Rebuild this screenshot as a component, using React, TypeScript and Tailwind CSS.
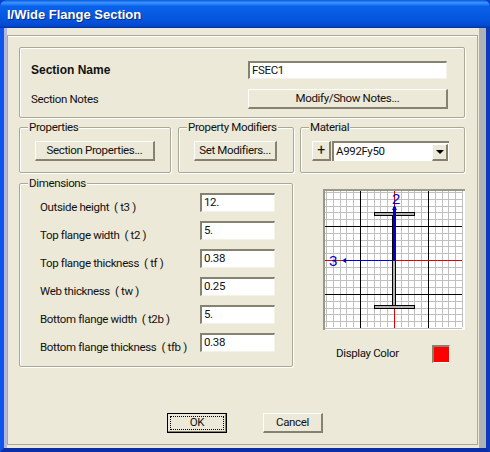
const font = "font-['Roboto','Liberation_Sans',Arial,sans-serif]";
const titleFont = "font-['Liberation_Sans',Arial,sans-serif]";

function Group({ title, className, children }: { title: string; className: string; children: React.ReactNode }) {
  return (
    <div className={`relative border border-[#aca899] shadow-[inset_1px_1px_0_#fff,1px_1px_0_#fff] rounded-[2px] ${className}`}>
      <span className="absolute left-[8px] top-[-8px] bg-[#ece9d8] px-[1px] leading-[14px]">{title}</span>
      {children}
    </div>
  );
}

function Btn({ children, className = '' }: { children: React.ReactNode; className?: string }) {
  return (
    <div className={`flex items-center justify-center bg-[#ece9d8] border-t border-l border-t-white border-l-white border-r-2 border-b-2 border-r-[#85836f] border-b-[#85836f] ${className}`}>
      {children}
    </div>
  );
}

function Field({ value, className = '' }: { value: string; className?: string }) {
  return (
    <div className={`bg-white pl-[2px] leading-[14px] border-t-2 border-l-2 border-t-[#85836f] border-l-[#85836f] border-r border-b border-r-[#f4f2e8] border-b-[#f4f2e8] ${className}`}>
      {value}
    </div>
  );
}

const DIMS = [
  ['Outside height  ( t3 )', '12.'],
  ['Top flange width  ( t2 )', '5.'],
  ['Top flange thickness  ( tf )', '0.38'],
  ['Web thickness  ( tw )', '0.25'],
  ['Bottom flange width  ( t2b )', '5.'],
  ['Bottom flange thickness  ( tfb )', '0.38'],
];

function Preview() {
  const minor = [];
  for (let i = 0; i < 21; i++) {
    minor.push(<line key={'v' + i} x1={1.5 + Math.round(i * 6.8)} y1="0" x2={1.5 + Math.round(i * 6.8)} y2="136" stroke="#c0c0c0" />);
    minor.push(<line key={'h' + i} x1="0" y1={1.5 + Math.round(i * 6.8)} x2="137" y2={1.5 + Math.round(i * 6.8)} stroke="#c0c0c0" />);
  }
  return (
    <div className="w-[142px] h-[141px] bg-white border-t-2 border-l-2 border-t-[#9a9888] border-l-[#9a9888]">
      <svg width="140" height="139" viewBox="0 0 140 139" className="block">
        {minor}
        <g stroke="#000">
          <line x1="35.5" y1="0" x2="35.5" y2="137" />
          <line x1="103.5" y1="0" x2="103.5" y2="137" />
          <line x1="0" y1="35.5" x2="137" y2="35.5" />
          <line x1="0" y1="103.5" x2="137" y2="103.5" />
        </g>
        <line x1="69.5" y1="0" x2="69.5" y2="137" stroke="#e00000" />
        <line x1="0" y1="69.5" x2="137" y2="69.5" stroke="#e00000" />
        <rect x="49.5" y="21.5" width="40" height="3" fill="#b4b4b4" stroke="#000" />
        <rect x="49.5" y="114.5" width="40" height="3" fill="#b4b4b4" stroke="#000" />
        <rect x="67.5" y="24.5" width="3" height="90" fill="#b4b4b4" stroke="#000" />
        <rect x="68" y="16" width="3" height="54" fill="#0000d0" />
        <line x1="20" y1="69.5" x2="69" y2="69.5" stroke="#0000d0" />
        <path d="M69.5 14l-2.5 5h5zM17 69.5l4-2.5v5z" fill="#0000d0" />
        <text x="71" y="13" fontSize="15" fill="#0000d0" textAnchor="middle" className={titleFont}>2</text>
        <text x="8" y="75" fontSize="15" fill="#0000d0" textAnchor="middle" className={titleFont}>3</text>
      </svg>
    </div>
  );
}

export default function App() {
  return (
    <div className={`w-[490px] h-[452px] overflow-hidden flex flex-col bg-[#0a3fd0] text-[11.5px] tracking-[-0.35px] text-[#111] ${font}`}>
      <div className="h-[28px] shrink-0 rounded-t-[7px] bg-[linear-gradient(180deg,#0a5ae0_0%,#3d95ff_10%,#0a62ea_22%,#0555dd_70%,#0349cf_92%,#02309e_100%)] flex items-center pl-[7px] pt-[1px]">
        <span className={`text-white text-[13px] font-bold tracking-normal [text-shadow:1px_1px_0_#0a2a80] ${titleFont}`}>I/Wide Flange Section</span>
      </div>
      <div className="flex-1 flex border-l-[4px] border-l-[#0f55ea] border-r-[4px] border-r-[#0a3aba] border-b-[4px] border-b-[#0a2ea8]">
        <div className="flex-1 flex border-l-[3px] border-l-[#b4b8d8] border-r-[7px] border-r-[#b0b0b8]">
          <div className="flex-1 flex flex-col bg-[#ece9d8] pt-[7px] pr-[1px] pb-[3px]">
            <div className="flex-1 border border-[#aca899] shadow-[inset_0_1px_0_#fff] pl-[11px] pt-[11px]">
              <Group title="" className="w-[446px] h-[71px] pl-[11px] pt-[13px] flex flex-col gap-[10px]">
                <div className="flex items-center h-[18px]">
                  <span className={`w-[217px] font-bold text-[12px] tracking-normal ${titleFont}`}>Section Name</span>
                  <Field value="FSEC1" className="w-[199px] h-[18px]" />
                </div>
                <div className="flex items-center h-[20px]">
                  <span className="w-[217px] pt-[1px]">Section Notes</span>
                  <Btn className="w-[200px] h-[20px]">Modify/Show Notes...</Btn>
                </div>
              </Group>
              <div className="flex mt-[9px]">
                <Group title="Properties" className="w-[152px] h-[46px] pt-[13px] pl-[15px]">
                  <Btn className="w-[120px] h-[20px]">Section Properties...</Btn>
                </Group>
                <Group title="Property Modifiers" className="ml-[7px] w-[116px] h-[46px] pt-[13px] pl-[15px]">
                  <Btn className="w-[83px] h-[20px]">Set Modifiers...</Btn>
                </Group>
                <Group title="Material" className="ml-[6px] w-[165px] h-[46px] pt-[13px] pl-[11px] flex items-start">
                  <Btn className="w-[19px] h-[20px] text-[14px]">+</Btn>
                  <div className="ml-[1px] flex items-center w-[117px] h-[20px] bg-white border-t-2 border-l-2 border-t-[#85836f] border-l-[#85836f] pl-[2px]">
                    <span className="flex-1">A992Fy50</span>
                    <Btn className="w-[16px] h-[17px] mr-[1px]">
                      <span className="w-0 h-0 border-x-[4px] border-x-transparent border-t-[4px] border-t-black" />
                    </Btn>
                  </div>
                </Group>
              </div>
              <div className="flex mt-[10px]">
                <Group title="Dimensions" className="w-[274px] h-[184px] pt-[9px] pl-[20px] flex flex-col gap-[9px]">
                  {DIMS.map(([label, value]) => (
                    <div key={label} className="flex items-start h-[19px]">
                      <span className="w-[160px] whitespace-pre pt-[6px]">{label}</span>
                      <Field value={value} className="w-[75px] h-[19px]" />
                    </div>
                  ))}
                </Group>
                <div className="ml-[30px] pt-[6px]">
                  <Preview />
                  <div className="flex items-center mt-[15px] pl-[13px]">
                    <span className="w-[96px]">Display Color</span>
                    <div className="w-[18px] h-[18px] bg-[#ff0000] border-t-2 border-l-2 border-t-[#85836f] border-l-[#85836f] border-r border-b border-r-white border-b-white" />
                  </div>
                </div>
              </div>
              <div className="flex mt-[46px] pl-[148px]">
                <Btn className="w-[60px] h-[20px] !border-black !border p-[2px] shadow-[inset_-1px_-1px_0_#85836f]">
                  <div className="w-full h-full border border-dotted border-black flex items-center justify-center">OK</div>
                </Btn>
                <Btn className="ml-[36px] w-[60px] h-[20px]">Cancel</Btn>
              </div>
            </div>
          </div>
        </div>
      </div>
    </div>
  );
}
